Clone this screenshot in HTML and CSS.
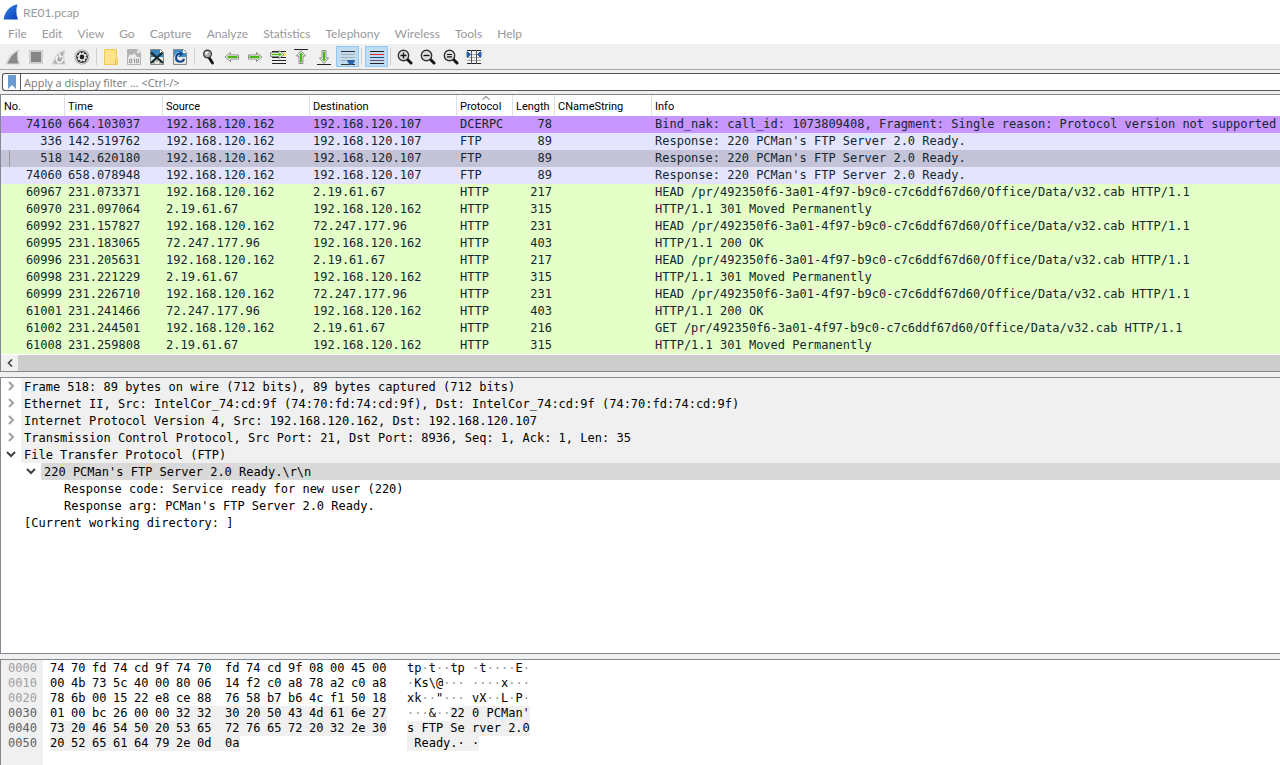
FILE: index.html
```
<!DOCTYPE html>
<html lang="en">
<head>
<meta charset="UTF-8">
<title>RE01.pcap</title>
<link rel="stylesheet" href="styles.css">
</head>
<body>

<header class="titlebar">
	<svg class="logo" width="16" height="16" viewBox="0 0 16 16">
		<defs>
			<linearGradient id="fin" x1="0" y1="0" x2="1" y2="1">
				<stop offset="0" stop-color="#2f8af0"/>
				<stop offset="1" stop-color="#0a3bb0"/>
			</linearGradient>
		</defs>
		<path d="M0.5 15.5C2 7 7 1.500 14.500 0.500C12.800 5 13 11 15 15.500Z" fill="url(#fin)"/>
	</svg>
	<span>RE01.pcap</span>
</header>

<nav class="menubar">
	<button type="button">File</button>
	<button type="button">Edit</button>
	<button type="button">View</button>
	<button type="button">Go</button>
	<button type="button">Capture</button>
	<button type="button">Analyze</button>
	<button type="button">Statistics</button>
	<button type="button">Telephony</button>
	<button type="button">Wireless</button>
	<button type="button">Tools</button>
	<button type="button">Help</button>
</nav>

<div class="toolbar">
	<button type="button" aria-label="Start capture">
		<svg viewBox="0 0 16 16"><path d="M0.500 15.500C3 8 7.500 2 14.500 0.500C12.500 5 13 11 15.500 15.500Z" fill="#d4d4d4"/><path d="M2.500 14.500C5 8.500 8 4.500 12.500 2.500C11.500 6.500 12 11 13.500 14.500Z" fill="#888"/></svg>
	</button>
	<button type="button" aria-label="Stop capture">
		<svg viewBox="0 0 16 16"><path d="M1 1h14v14H1z" fill="#d0d0d0"/><path d="M3 3h10v10H3z" fill="#858585"/></svg>
	</button>
	<button type="button" aria-label="Restart capture">
		<svg viewBox="0 0 16 16"><path d="M0.500 15.500C3 8 7.500 2 14.500 0.500C12.500 5 13 11 15.500 15.500Z" fill="#d4d4d4"/><path d="M2.500 14.500C5 8.500 8 4.500 12.500 2.500C11.500 6.500 12 11 13.500 14.500Z" fill="#aaa"/><path d="M7 7.500A3.200 3.200 0 1 0 11.500 9M9 5v4M9 7.500h3" fill="none" stroke="#f4f4f4" stroke-width="1.600"/></svg>
	</button>
	<button type="button" aria-label="Capture options">
		<svg viewBox="0 0 16 16"><circle cx="8" cy="8" r="7.500" fill="#999"/><circle cx="8" cy="8" r="6.700" fill="#f4f4f4"/><circle cx="8" cy="8" r="5.900" fill="#333"/><circle cx="8" cy="8" r="3.800" fill="none" stroke="#eee" stroke-width="2" stroke-dasharray="1.500 1.480"/><circle cx="8" cy="8" r="3.100" fill="none" stroke="#eee" stroke-width="1.400"/><circle cx="8" cy="8" r="2" fill="#222"/></svg>
	</button>
	<i class="sep"></i>
	<button type="button" aria-label="Open file">
		<svg viewBox="0 0 16 16"><path d="M1.500 0.500h12v9h1v6h-13z" fill="#ffe28a" stroke="#ecc957"/><path d="M12.500 10v5" stroke="#e5bd40"/></svg>
	</button>
	<button type="button" aria-label="Save file">
		<svg viewBox="0 0 16 16"><path d="M1.500 0.500h10l3 3v12h-13z" fill="#e8e8e8" stroke="#b4b4b4"/><path d="M2 1h9v3h3v4H2z" fill="#b2b2b2"/><path d="M3 8c0-3 2-3 3-1.500L8 4l3 4zM11 1l3 3h-3z" fill="#eee"/><g fill="none" stroke="#999" stroke-width="1"><path d="M3.500 10.500h2v3h-2zM8.500 10v4M7.500 10.500h1M10.500 10.500h2v3h-2z"/></g></svg>
	</button>
	<button type="button" aria-label="Close file">
		<svg viewBox="0 0 16 16"><path d="M1.500 0.500h10l3 3v12h-13z" fill="#e6e9df" stroke="#888"/><path d="M2 1h9v3h3v4H2z" fill="#3484bd"/><path d="M11 1l3 3h-3z" fill="#fff"/><path d="M4 12h2M7 12h2M11 12h2M4 14h2M10 14h2" stroke="#777"/><path d="M2 3.500L14 14M13.500 3.500L2 14" stroke="#17272f" stroke-width="2.200"/></svg>
	</button>
	<button type="button" aria-label="Reload file">
		<svg viewBox="0 0 16 16"><path d="M1.500 0.500h10l3 3v12h-13z" fill="#e6e9df" stroke="#888"/><path d="M2 1h9v3h3v4H2z" fill="#3c91c9"/><path d="M11 1l3 3h-3z" fill="#fff"/><path d="M8 4.700a4 4 0 1 0 4 5" fill="none" stroke="#fff" stroke-width="3.600"/><path d="M8 4.700a4 4 0 1 0 4 5" fill="none" stroke="#17458c" stroke-width="2.200"/><path d="M7.500 2l4 3-4 3z" fill="#17458c"/></svg>
	</button>
	<i class="sep"></i>
	<button type="button" aria-label="Find packet">
		<svg viewBox="0 0 16 16"><path d="M8 8.500l3.500 5.500" stroke="#111" stroke-width="2.800" stroke-linecap="round"/><circle cx="6.500" cy="5" r="3.900" fill="#aaa" stroke="#333" stroke-width="1.200"/><circle cx="5.500" cy="4" r="1.500" fill="#eee"/></svg>
	</button>
	<button type="button" aria-label="Previous packet">
		<svg viewBox="0 0 16 16"><path d="M1 8l5.500-4.500v2.500h8v4h-8v2.500z" fill="#fff" stroke="#8a8a8a"/><path d="M2.800 8l3-2.300v1.300h7.700v2H5.800v1.300z" fill="#49b813"/></svg>
	</button>
	<button type="button" aria-label="Next packet">
		<svg viewBox="0 0 16 16"><path d="M15 8L9.500 3.500v2.500h-8v4h8v2.500z" fill="#fff" stroke="#8a8a8a"/><path d="M13.200 8l-3-2.300v1.300H2.500v2h7.700v1.300z" fill="#49b813"/></svg>
	</button>
	<button type="button" aria-label="Go to packet">
		<svg viewBox="0 0 16 16"><path d="M2 2.500h14M2 11.500h14M2 14.500h14M2 8.500h14" stroke="#222"/><path d="M12 4h4v3h-4z" fill="#ffe25a"/><path d="M14 5.500L9 1.500v2H.5v4H9v2z" fill="#fff" stroke="#8a8a8a"/><path d="M12.200 5.500l-3-2v1.300H1.500v1.500h7.700v1.300z" fill="#49b813"/></svg>
	</button>
	<button type="button" aria-label="First packet">
		<svg viewBox="0 0 16 16"><path d="M1 .5h14" stroke="#222"/><path d="M8 1.500l4.500 5.500H10v7.500H6V7H3.500z" fill="#fff" stroke="#8a8a8a"/><path d="M8 3.200l2.300 3H9v7.300H7V6.200H5.700z" fill="#49b813"/></svg>
	</button>
	<button type="button" aria-label="Last packet">
		<svg viewBox="0 0 16 16"><path d="M1 15.500h14" stroke="#222"/><path d="M8 14.500L12.500 9H10V1.500H6V9H3.500z" fill="#fff" stroke="#8a8a8a"/><path d="M8 12.800l2.300-3H9V2.500H7v7.300H5.700z" fill="#49b813"/></svg>
	</button>
	<button type="button" class="on" aria-label="Auto scroll">
		<svg viewBox="0 0 16 16"><path d="M1 2.500h14M1 15.500h14" stroke="#333"/><path d="M1 5.500h14M1 8.500h14M1 11.500h14" stroke="#aab0a8"/><path d="M7 11h8l-1 3-3 2-3-2z" fill="#2d62a8"/></svg>
	</button>
	<i class="sep"></i>
	<button type="button" class="on" aria-label="Colorize packets">
		<svg viewBox="0 0 16 16"><path d="M1 2.500h14M1 14.500h14" stroke="#222"/><path d="M1 5.500h14" stroke="#e22"/><path d="M1 8.500h14" stroke="#204a87"/><path d="M1 11.500h14" stroke="#75507b"/></svg>
	</button>
	<i class="sep"></i>
	<button type="button" aria-label="Zoom in">
		<svg viewBox="0 0 16 16"><path d="M10 10l4 4" stroke="#111" stroke-width="3" stroke-linecap="round"/><circle cx="6.500" cy="6.500" r="5.200" fill="#ddd" stroke="#333" stroke-width="1.400"/><path d="M3.500 6.500h6M6.500 3.500v6" stroke="#111" stroke-width="1.300"/></svg>
	</button>
	<button type="button" aria-label="Zoom out">
		<svg viewBox="0 0 16 16"><path d="M10 10l4 4" stroke="#111" stroke-width="3" stroke-linecap="round"/><circle cx="6.500" cy="6.500" r="5.200" fill="#ddd" stroke="#333" stroke-width="1.400"/><path d="M3.500 6.500h6" stroke="#111" stroke-width="1.300"/></svg>
	</button>
	<button type="button" aria-label="Normal size">
		<svg viewBox="0 0 16 16"><path d="M10 10l4 4" stroke="#111" stroke-width="3" stroke-linecap="round"/><circle cx="6.500" cy="6.500" r="5.200" fill="#ddd" stroke="#333" stroke-width="1.400"/><path d="M4 5.500h5M4 7.800h5" stroke="#111" stroke-width="1.200"/></svg>
	</button>
	<button type="button" aria-label="Resize columns">
		<svg viewBox="0 0 16 16"><path d="M1 1.500h14M1 14.500h14" stroke="#222"/><path d="M1 5.500h14M1 8.500h14M1 11.500h14" stroke="#aaa"/><path d="M5.500 1v14M10.500 1v14" stroke="#555"/><path d="M1 3h1l2.500 2.500L2 8H1zM15 3h-1l-2.500 2.500L14 8h1z" fill="#2d62a8" stroke="#2d62a8"/></svg>
	</button>
</div>

<div class="filter">
	<button type="button" aria-label="Bookmarks">
		<svg width="8" height="14" viewBox="0 0 8 14"><path d="M0 0h8v14l-4-4-4 4z" fill="#6b9bd2"/></svg>
	</button>
	<input type="text" aria-label="Display filter" placeholder="Apply a display filter … &lt;Ctrl-/&gt;">
</div>

<main>
<section class="pane packets">
	<table>
		<colgroup>
			<col class="c-no"><col class="c-time"><col class="c-addr"><col class="c-addr"><col class="c-proto"><col class="c-len"><col class="c-cname"><col>
		</colgroup>
		<thead>
			<tr><th>No.</th><th>Time</th><th>Source</th><th>Destination</th><th class="sorted">Protocol<svg width="8" height="4" viewBox="0 0 8 4"><path d="M0.500 3.500L4 .5l3.500 3" fill="none" stroke="#555"/></svg></th><th>Length</th><th>CNameString</th><th>Info</th></tr>
		</thead>
		<tbody>
			<tr class="dcerpc"><td>74160</td><td>664.103037</td><td>192.168.120.162</td><td>192.168.120.107</td><td>DCERPC</td><td>78</td><td></td><td>Bind_nak: call_id: 1073809408, Fragment: Single reason: Protocol version not supported</td></tr>
			<tr class="ftp"><td>336</td><td>142.519762</td><td>192.168.120.162</td><td>192.168.120.107</td><td>FTP</td><td>89</td><td></td><td>Response: 220 PCMan's FTP Server 2.0 Ready.</td></tr>
			<tr class="ftp selected"><td>518</td><td>142.620180</td><td>192.168.120.162</td><td>192.168.120.107</td><td>FTP</td><td>89</td><td></td><td>Response: 220 PCMan's FTP Server 2.0 Ready.</td></tr>
			<tr class="ftp"><td>74060</td><td>658.078948</td><td>192.168.120.162</td><td>192.168.120.107</td><td>FTP</td><td>89</td><td></td><td>Response: 220 PCMan's FTP Server 2.0 Ready.</td></tr>
			<tr class="http"><td>60967</td><td>231.073371</td><td>192.168.120.162</td><td>2.19.61.67</td><td>HTTP</td><td>217</td><td></td><td>HEAD /pr/492350f6-3a01-4f97-b9c0-c7c6ddf67d60/Office/Data/v32.cab HTTP/1.1</td></tr>
			<tr class="http"><td>60970</td><td>231.097064</td><td>2.19.61.67</td><td>192.168.120.162</td><td>HTTP</td><td>315</td><td></td><td>HTTP/1.1 301 Moved Permanently</td></tr>
			<tr class="http"><td>60992</td><td>231.157827</td><td>192.168.120.162</td><td>72.247.177.96</td><td>HTTP</td><td>231</td><td></td><td>HEAD /pr/492350f6-3a01-4f97-b9c0-c7c6ddf67d60/Office/Data/v32.cab HTTP/1.1</td></tr>
			<tr class="http"><td>60995</td><td>231.183065</td><td>72.247.177.96</td><td>192.168.120.162</td><td>HTTP</td><td>403</td><td></td><td>HTTP/1.1 200 OK</td></tr>
			<tr class="http"><td>60996</td><td>231.205631</td><td>192.168.120.162</td><td>2.19.61.67</td><td>HTTP</td><td>217</td><td></td><td>HEAD /pr/492350f6-3a01-4f97-b9c0-c7c6ddf67d60/Office/Data/v32.cab HTTP/1.1</td></tr>
			<tr class="http"><td>60998</td><td>231.221229</td><td>2.19.61.67</td><td>192.168.120.162</td><td>HTTP</td><td>315</td><td></td><td>HTTP/1.1 301 Moved Permanently</td></tr>
			<tr class="http"><td>60999</td><td>231.226710</td><td>192.168.120.162</td><td>72.247.177.96</td><td>HTTP</td><td>231</td><td></td><td>HEAD /pr/492350f6-3a01-4f97-b9c0-c7c6ddf67d60/Office/Data/v32.cab HTTP/1.1</td></tr>
			<tr class="http"><td>61001</td><td>231.241466</td><td>72.247.177.96</td><td>192.168.120.162</td><td>HTTP</td><td>403</td><td></td><td>HTTP/1.1 200 OK</td></tr>
			<tr class="http"><td>61002</td><td>231.244501</td><td>192.168.120.162</td><td>2.19.61.67</td><td>HTTP</td><td>216</td><td></td><td>GET /pr/492350f6-3a01-4f97-b9c0-c7c6ddf67d60/Office/Data/v32.cab HTTP/1.1</td></tr>
			<tr class="http"><td>61008</td><td>231.259808</td><td>2.19.61.67</td><td>192.168.120.162</td><td>HTTP</td><td>315</td><td></td><td>HTTP/1.1 301 Moved Permanently</td></tr>
		</tbody>
	</table>
	<div class="scrollbar">
		<button type="button" aria-label="Scroll left"><svg width="6" height="8" viewBox="0 0 6 8"><path d="M5 .5L1.500 4 5 7.500" fill="none" stroke="#444" stroke-width="1.600"/></svg></button>
		<div class="thumb"></div>
	</div>
</section>

<section class="pane details">
	<ul>
		<li><svg class="arrow" viewBox="0 0 10 10"><path d="M3 1l4 4-4 4" /></svg><span class="proto">Frame 518: 89 bytes on wire (712 bits), 89 bytes captured (712 bits)</span></li>
		<li><svg class="arrow" viewBox="0 0 10 10"><path d="M3 1l4 4-4 4" /></svg><span class="proto">Ethernet II, Src: IntelCor_74:cd:9f (74:70:fd:74:cd:9f), Dst: IntelCor_74:cd:9f (74:70:fd:74:cd:9f)</span></li>
		<li><svg class="arrow" viewBox="0 0 10 10"><path d="M3 1l4 4-4 4" /></svg><span class="proto">Internet Protocol Version 4, Src: 192.168.120.162, Dst: 192.168.120.107</span></li>
		<li><svg class="arrow" viewBox="0 0 10 10"><path d="M3 1l4 4-4 4" /></svg><span class="proto">Transmission Control Protocol, Src Port: 21, Dst Port: 8936, Seq: 1, Ack: 1, Len: 35</span></li>
		<li><svg class="arrow open" viewBox="0 0 10 10"><path d="M1 3l4 4 4-4" /></svg><span class="proto">File Transfer Protocol (FTP)</span></li>
		<li class="level2"><svg class="arrow open" viewBox="0 0 10 10"><path d="M1 3l4 4 4-4" /></svg><span class="current">220 PCMan's FTP Server 2.0 Ready.\r\n</span></li>
		<li class="level3"><span>Response code: Service ready for new user (220)</span></li>
		<li class="level3"><span>Response arg: PCMan's FTP Server 2.0 Ready.</span></li>
		<li class="level1"><span>[Current working directory: ]</span></li>
	</ul>
</section>

<section class="pane bytes">
<pre class="offset">0000
0010
0020
<b>0030
0040
0050</b></pre>
<table class="hex" id="hex"></table>
<pre class="ascii">tp<i>·</i>t<i>··</i>tp <i>·</i>t<i>····</i>E<i>·</i>
<i>·</i>Ks\@<i>···</i> <i>····</i>x<i>···</i>
xk<i>··</i>"<i>···</i> vX<i>··</i>L<i>·</i>P<i>·</i>
<i>···</i>&amp;<i>··</i><mark>22 0 PCMan'</mark>
<mark>s FTP Se rver 2.0</mark>
<mark> Ready.· ·</mark></pre>
</section>
</main>

<script src="hex.js"></script>
</body>
</html>
```
FILE: hex.js
```
var lines = [
	"74 70 fd 74 cd 9f 74 70 fd 74 cd 9f 08 00 45 00",
	"00 4b 73 5c 40 00 80 06 14 f2 c0 a8 78 a2 c0 a8",
	"78 6b 00 15 22 e8 ce 88 76 58 b7 b6 4c f1 50 18",
	"01 00 bc 26 00 00 32 32 30 20 50 43 4d 61 6e 27",
	"73 20 46 54 50 20 53 65 72 76 65 72 20 32 2e 30",
	"20 52 65 61 64 79 2e 0d 0a"
];
var selStart = 54;	// first byte of the FTP payload
var selEnd = 88;
var table = document.getElementById("hex");

for (var i = 0; i < lines.length; i++) {
	var row = table.insertRow();
	var bytes = lines[i].split(" ");
	for (var j = 0; j < bytes.length; j++) {
		var cell = row.insertCell();
		var n = i * 16 + j;
		cell.textContent = bytes[j];
		if (n >= selStart) {
			cell.className = n == selEnd ? "sel end" : "sel";
		}
	}
}
```
FILE: styles.css
```
* {
	box-sizing: border-box;
}

body {
	margin: 0;
	height: 100vh;
	display: flex;
	flex-direction: column;
	overflow: hidden;
	background: #f0f0f0;
	font: 12px Lato, "Open Sans", sans-serif;
	color: #000;
}

button {
	border: 0;
	padding: 0;
	background: none;
	font: inherit;
	color: inherit;
}

.titlebar {
	display: flex;
	align-items: center;
	gap: 4px;
	height: 24px;
	padding-left: 3px;
	background: #fff;
	color: #999;
}

.menubar {
	display: flex;
	height: 20px;
	padding-left: 1px;
	background: #fff;
	color: #999;
}

.menubar button {
	padding: 0 8px 0 7px;
	line-height: 20px;
}

.toolbar {
	display: flex;
	align-items: flex-start;
	height: 26px;
	padding: 2px 0 0 2px;
	border-bottom: 1px solid #a8a8a8;
}

.toolbar button {
	width: 23px;
	height: 21px;
	padding: 3px 4px 2px 3px;
}

.toolbar button.on {
	padding: 2px 3px 1px;
	background: #c0dcf3;
	border: 1px solid #90c8f6;
}

.toolbar svg {
	display: block;
	width: 16px;
	height: 16px;
}

.toolbar .sep {
	width: 1px;
	height: 17px;
	margin: 2px 3px 0 2px;
	background: #cfcfcf;
}

.filter {
	display: flex;
	height: 18px;
	margin: 3px 0 3px 2px;
	background: #fff;
	border: 1px solid #555;
	border-right: 0;
	border-radius: 3px 0 0 3px;
}

.filter button {
	width: 18px;
	border-right: 1px solid #555;
}

.filter button svg {
	display: block;
	margin: auto;
}

.filter input {
	flex: 1;
	min-width: 0;
	border: 0;
	padding: 0 3px;
	background: none;
	outline: none;
	font: 11px "Open Sans", sans-serif;
}

.filter input::placeholder {
	color: #777;
}

main {
	flex: 1;
	min-height: 0;
	display: flex;
	flex-direction: column;
	gap: 5px;
}

.pane {
	background: #fff;
	border: 1px solid #828790;
	border-right: 0;
	font-family: "DejaVu Sans Mono", "Liberation Mono", monospace;
	font-size: 12px;
	overflow: hidden;
}

table {
	table-layout: fixed;
	border-collapse: separate;
	border-spacing: 0;
}

/* packet list */
.packets {
	flex: none;
}

.packets table {
	width: 100%;
}

.c-no { width: 64px; }
.c-time { width: 98px; }
.c-addr { width: 147px; }
.c-proto { width: 56px; }
.c-len { width: 42px; }
.c-cname { width: 97px; }

th {
	position: relative;
	height: 21px;
	padding: 2px 3px 0;
	border-right: 1px solid #e0e0e0;
	font: 11px Roboto, sans-serif;
	text-align: left;
	white-space: nowrap;
}

th:last-child {
	border-right: 0;
}

.sorted svg {
	position: absolute;
	top: 1px;
	left: 25px;
}

.packets td {
	height: 17px;
	padding: 0 3px;
	line-height: 17px;
	white-space: nowrap;
	overflow: hidden;
	color: #12272e;
}

.packets td:nth-child(1),
.packets td:nth-child(6) {
	text-align: right;
}

.dcerpc { background: #c797ff; }
.ftp { background: #e4e4ff; }
.http { background: #e4ffc7; }
.ftp.selected { background: #c5c3d8; }

.selected td:first-child {
	background: linear-gradient(#999, #999) 8px 0 / 1px 100% no-repeat;
}

.scrollbar {
	display: flex;
	height: 17px;
	padding-top: 1px;
	background: #fff;
}

.scrollbar button {
	width: 17px;
	background: #f0f0f0;
}

.scrollbar svg {
	display: block;
	margin: auto;
}

.scrollbar .thumb {
	flex: 1;
	background: #cdcdcd;
}

/* packet details */
.details {
	flex: 34 1 0;
}

.details ul {
	margin: 0;
	padding: 0;
	list-style: none;
}

.details li {
	display: flex;
	align-items: flex-start;
	height: 17px;
	white-space: nowrap;
}

.details li span {
	flex: 1;
	padding: 2px 0 0 3px;
	line-height: 15px;
}

.arrow {
	width: 10px;
	height: 10px;
	margin: 3px 5px;
	fill: none;
	stroke: #a0a0a0;
	stroke-width: 2;
}

.arrow.open {
	stroke: #404040;
}

.proto { background: #f0f0f0; }
.current { background: #d9d9d9; }

.level1 { padding-left: 20px; }
.level2 { padding-left: 20px; }
.level3 { padding-left: 60px; }

/* packet bytes */
.bytes {
	flex: 13 1 0;
	display: flex;
	align-items: flex-start;
	border-bottom: 0;
}

.bytes pre {
	margin: 0;
	font: inherit;
	line-height: 15px;
	padding-top: 1px;
}

.bytes .offset {
	align-self: stretch;
	width: 42px;
	padding-left: 7px;
	background: #f0f0f0;
	color: #a0a0a0;
}

.offset b {
	font-weight: normal;
	color: #606060;
}

.hex {
	width: 337px;
	margin: 1px 20px 0 7px;
}

.hex td {
	width: 21px;
	height: 15px;
	padding: 0;
	line-height: 15px;
}

.hex td:nth-child(8) {
	width: 28px;
}

.hex td:nth-child(16) {
	width: 15px;
}

.bytes i {
	font-style: normal;
	color: #999;
}

.bytes mark,
.hex .sel {
	background: #f0f0f0;
	color: inherit;
}

.bytes mark {
	display: inline-block;
}

.hex .end {
	background: linear-gradient(#f0f0f0, #f0f0f0) 0 0 / 15px 100% no-repeat;
}
```
